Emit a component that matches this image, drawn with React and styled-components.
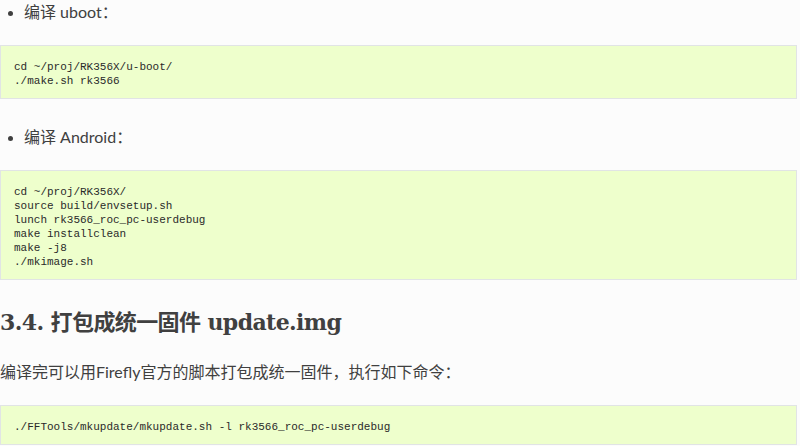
import styled, { createGlobalStyle } from 'styled-components';

const GlobalStyle = createGlobalStyle`
  html, body {
    margin: 0;
    padding: 0;
    background: #fcfcfc;
  }
  body {
    font-family: Lato, "Noto Sans CJK SC", sans-serif;
    color: #404040;
    font-size: 16px;
  }
`;

const Page = styled.div`
  width: 800px;
  height: 446px;
  overflow: hidden;
  background: #fcfcfc;
`;

const List = styled.ul`
  margin: 0;
  padding: 0 0 0 24px;
  list-style: disc;
`;

const Item = styled.li`
  line-height: 24px;
  margin-bottom: ${(p) => p.$last ? '0' : '26px'};

  &::marker {
    font-size: 14px;
  }
`;

const CodeBlock = styled.pre`
  margin: ${(p) => p.$top || '21px'} 3px 0 ${(p) => p.$inList ? '-24px' : '0'};
  padding: 14px 13px 10px;
  background: #eeffcc;
  border: 1px solid #e1e4e5;
  font-family: "Liberation Mono", monospace;
  font-size: 11px;
  line-height: 14px;
  color: #2a2a2a;
  white-space: pre;
`;

const Heading = styled.h2`
  margin: 28px 0 0;
  font-family: "DejaVu Serif", "Noto Sans CJK SC", serif;
  font-size: 22px;
  line-height: 28px;
  font-weight: 700;
  color: #404040;
  letter-spacing: -0.6px;
`;

const Para = styled.p`
  margin: 24px 0 0;
  line-height: 24px;
  font-family: Lato, "Noto Sans CJK SC", sans-serif;
`;

const App = () => (
  <Page>
    <GlobalStyle />
    <List>
      <Item>
        编译 uboot：
        <CodeBlock $inList>{`cd ~/proj/RK356X/u-boot/
./make.sh rk3566`}</CodeBlock>
      </Item>
      <Item $last>
        编译 Android：
        <CodeBlock $inList>{`cd ~/proj/RK356X/
source build/envsetup.sh
lunch rk3566_roc_pc-userdebug
make installclean
make -j8
./mkimage.sh`}</CodeBlock>
      </Item>
    </List>
    <Heading>3.4. 打包成统一固件 update.img</Heading>
    <Para>编译完可以用Firefly官方的脚本打包成统一固件，执行如下命令：</Para>
    <CodeBlock $top="21px">{`./FFTools/mkupdate/mkupdate.sh -l rk3566_roc_pc-userdebug`}</CodeBlock>
  </Page>
);

export default App;
